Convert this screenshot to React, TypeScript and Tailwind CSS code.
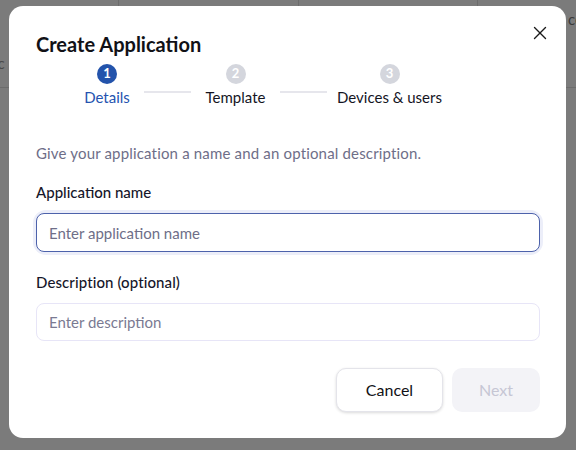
import { X } from "lucide-react";

const STEPS = [
  { n: 1, label: "Details", width: "w-[42px]", active: true },
  { n: 2, label: "Template", width: "w-[57px]", active: false },
  { n: 3, label: "Devices & users", width: "w-[93px]", active: false },
];

function Stepper() {
  return (
    <div className="ml-[50px] mt-[6px] flex items-start">
      {STEPS.map((s, i) => (
        <div key={s.n} className="flex items-start">
          {i > 0 && <div className="mx-[16px] mt-[27px] h-[2px] w-[47px] bg-[#e6e6ec]" />}
          <div className={`flex flex-col items-center ${s.width}`}>
            <div
              className={
                s.active
                  ? "flex h-[20px] w-[20px] items-center justify-center rounded-full bg-[#2353ab] text-[13px] font-bold text-white"
                  : "flex h-[20px] w-[20px] items-center justify-center rounded-full bg-[#d4d6dd] text-[13px] font-bold text-white"
              }
            >
              {s.n}
            </div>
            <div
              className={
                s.active
                  ? "mt-[3px] whitespace-nowrap text-[15px] leading-[20px] text-[#2553b0]"
                  : "mt-[3px] whitespace-nowrap text-[15px] leading-[20px] text-[#15151f]"
              }
            >
              {s.label}
            </div>
          </div>
        </div>
      ))}
    </div>
  );
}

export default function App() {
  return (
    <div
      className="relative h-[450px] w-[576px] overflow-hidden bg-[#7b7b7b]"
      style={{ fontFamily: "Lato, 'Noto Sans', sans-serif" }}
    >
      {/* page behind the overlay */}
      <div className="grid h-[88px] grid-cols-[119px_180px_179px_98px] border-b border-[#6c6c6c]">
        <div className="border-r border-[#6c6c6c]" />
        <div className="border-r border-[#6c6c6c]" />
        <div className="border-r border-[#6c6c6c]" />
        <div className="pl-[90px] pt-[8px] text-[15px] text-[#3a3a3a]">ce</div>
      </div>
      <div className="absolute left-[-6px] top-[52px] text-[15px] text-[#4a4a4a]">ic</div>

      {/* modal */}
      <div className="absolute left-[9px] top-[6px] h-[432px] w-[557px] rounded-[14px] bg-white pb-[26px] pl-[27px] pr-[26px] pt-[24px]">
        <button className="absolute right-[15px] top-[16px] text-[#1a1a1a]">
          <X size={22} strokeWidth={1.5} />
        </button>

        <h1 className="text-[20px] font-bold leading-[28px] text-[#111116]">Create Application</h1>

        <Stepper />

        <p className="mt-[35px] text-[15px] leading-[22px] tracking-[0.17px] text-[#6e6e88]">
          Give your application a name and an optional description.
        </p>

        <label className="mt-[17px] block text-[15px] font-medium leading-[22px] text-[#16162a]">
          Application name
        </label>
        <div className="mt-[10px] rounded-[10px] ring-[3px] ring-[#eceef9]">
          <input
            className="block h-[39px] w-full rounded-[8px] border border-[#4d62ab] px-[12px] text-[15px] text-[#16162a] outline-none placeholder:text-[#6e6e88]"
            placeholder="Enter application name"
          />
        </div>

        <label className="mt-[19px] block text-[15px] font-medium leading-[22px] tracking-[0.1px] text-[#16162a]">
          Description (optional)
        </label>
        <input
          className="mt-[10px] block h-[38px] w-full rounded-[8px] border border-[#e7e5f7] px-[12px] text-[15px] text-[#16162a] outline-none placeholder:text-[#7a7a92]"
          placeholder="Enter description"
        />

        <div className="mt-[27px] flex justify-end gap-[9px]">
          <button className="h-[44px] w-[107px] rounded-[10px] border border-[#e4e4ea] bg-white text-[16px] text-[#111116] shadow-[0_1px_3px_rgba(0,0,0,0.15)]">
            Cancel
          </button>
          <button className="h-[44px] w-[88px] rounded-[10px] bg-[#f3f3f7] text-[16px] text-[#c6c6d4]">
            Next
          </button>
        </div>
      </div>
    </div>
  );
}
